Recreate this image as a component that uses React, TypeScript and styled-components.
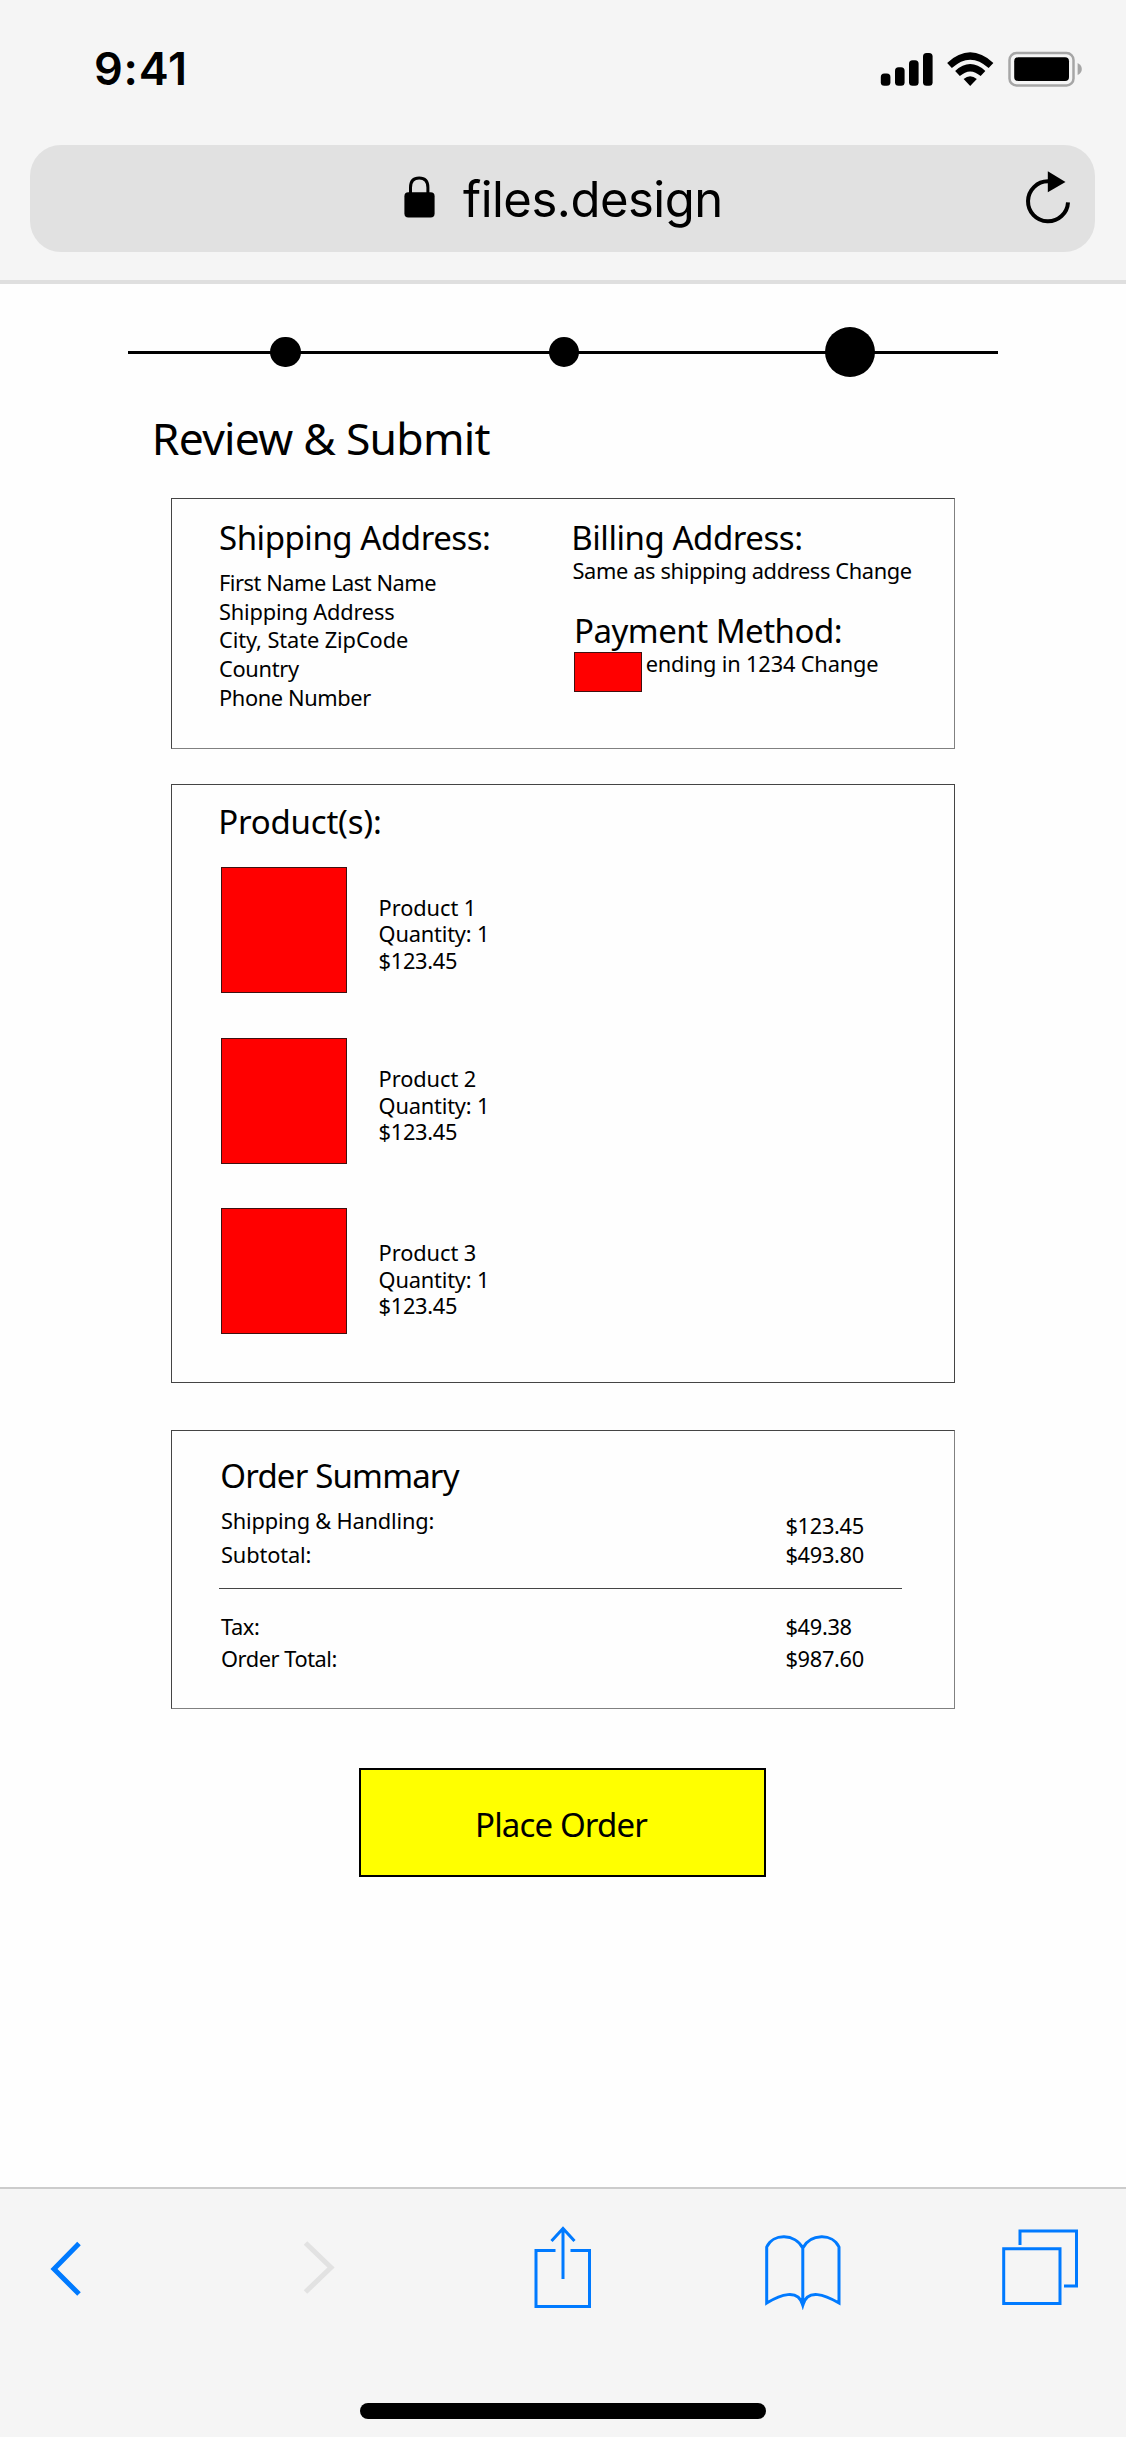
import React from 'react';
import styled, { createGlobalStyle } from 'styled-components';

const GlobalStyle = createGlobalStyle`
  * { box-sizing: border-box; }
  body { margin: 0; background: #fff; }
`;

const Screen = styled.div`
  width: 1126px;
  height: 2437px;
  display: flex;
  flex-direction: column;
  overflow: hidden;
  background: #fefefe;
  color: #000;
  font-family: 'Noto Sans', 'Open Sans', sans-serif;
`;

/* Browser chrome */
const BrowserHeader = styled.header`
  height: 284px;
  flex: none;
  background: #f5f5f5;
  border-bottom: 4px solid #dfdfdf;
  font-family: Inter, 'Liberation Sans', sans-serif;
`;
const StatusBar = styled.div`
  height: 144.7px;
  padding: 41px 44px 0 94px;
  display: flex;
  justify-content: space-between;
  align-items: flex-start;
`;
const Clock = styled.div`
  font-size: 45px;
  line-height: 56px;
  font-weight: 600;
  letter-spacing: 0.8px;
`;
const StatusIcons = styled.svg`
  margin-top: 7px;
  display: block;
`;
const AddressBar = styled.div`
  height: 107.5px;
  margin: 0 31px 0 30px;
  padding: 0 25px 0 374px;
  border-radius: 31px;
  background: #e1e1e1;
  display: flex;
  align-items: center;
`;
const Host = styled.div`
  flex: 1;
  margin-left: 27px;
  padding-top: 4px;
  font-size: 49px;
  line-height: 60px;
  letter-spacing: -0.5px;
`;

/* Page */
const Page = styled.main`
  flex: 1;
  display: flex;
  flex-direction: column;
  align-items: flex-start;
`;
const Steps = styled.div`
  height: 50px;
  margin: 43px 0 0 127.6px;
  display: flex;
  align-items: center;
`;
const StepLine = styled.div<{ $w: number }>`
  width: ${(p) => p.$w}px;
  height: 3px;
  background: #000;
`;
const StepDot = styled.div<{ $size?: number }>`
  width: ${(p) => p.$size ?? 30.4}px;
  height: ${(p) => p.$size ?? 30.4}px;
  margin: 0 -2px;
  border-radius: 50%;
  background: #000;
`;
const Title = styled.h1`
  margin: 31px 0 0 151.8px;
  font-size: 44.5px;
  line-height: 60px;
  font-weight: 400;
  letter-spacing: -0.75px;
`;
const Card = styled.section<{ $top: number; $height: number; $pad: string; $edge?: string }>`
  width: 784px;
  height: ${(p) => p.$height}px;
  margin: ${(p) => p.$top}px 0 0 171px;
  padding: ${(p) => p.$pad};
  border: 1px solid #444;
  border-right-color: ${(p) => p.$edge ?? '#444'};
  border-bottom-color: ${(p) => p.$edge ?? '#444'};
`;
const Heading = styled.h2<{ $ls?: number; $m?: string }>`
  margin: ${(p) => p.$m ?? '0'};
  font-size: 33px;
  line-height: 40px;
  font-weight: 400;
  letter-spacing: ${(p) => p.$ls ?? -0.45}px;
  white-space: nowrap;
`;
const Line = styled.div<{ $ls?: number; $lh?: number; $m?: string }>`
  margin: ${(p) => p.$m ?? '0'};
  font-size: 21.8px;
  line-height: ${(p) => p.$lh ?? 28.8}px;
  letter-spacing: ${(p) => p.$ls ?? -0.38}px;
  white-space: nowrap;
`;
const Columns = styled.div`
  display: grid;
  grid-template-columns: 352.3px 1fr;
`;
const PaymentRow = styled.div`
  display: flex;
  align-items: flex-start;
  margin: 1px 0 0 3.2px;
`;
const CardBrand = styled.div`
  width: 68px;
  height: 39.7px;
  margin-right: 3.2px;
  border: 1px solid #401010;
  background: #f00;
`;
const ProductList = styled.div`
  margin: 25px 0 0 2.7px;
  display: grid;
  gap: 44.6px;
`;
const ProductRow = styled.div`
  display: flex;
  height: 126px;
`;
const Thumb = styled.div`
  width: 126px;
  height: 126px;
  border: 1px solid #401010;
  background: #f00;
`;
const ProductInfo = styled.div<{ $offset: number }>`
  margin-left: 31.6px;
  padding-top: ${(p) => p.$offset}px;
`;
const SummaryRow = styled.div<{ $top: number }>`
  display: grid;
  grid-template-columns: 564.4px auto;
  margin: ${(p) => p.$top}px 0 0 2px;
`;
const Divider = styled.hr`
  width: 683px;
  height: 1px;
  margin: 18.5px 0 0;
  border: 0;
  background: #444;
`;
const PlaceOrder = styled.button`
  width: 407px;
  height: 109px;
  margin: 59px 0 0 359px;
  padding: 4px 3px 0 0;
  border: 2px solid #000;
  background: #ff0;
  color: #000;
  font-family: inherit;
  font-size: 33px;
  line-height: 40px;
  letter-spacing: -0.85px;
`;

/* Bottom toolbar */
const Toolbar = styled.footer`
  height: 250px;
  flex: none;
  background: #f5f5f5;
  border-top: 2px solid #ccc;
  display: flex;
  flex-direction: column;
`;
const ToolRow = styled.nav`
  display: flex;
  padding: 37px 0 0 50px;
`;
const ToolIcon = styled.svg<{ $gap?: number }>`
  display: block;
  margin-left: ${(p) => p.$gap ?? 0}px;
  fill: none;
  stroke: #007aff;
  stroke-width: 3;
`;
const HomeBar = styled.div`
  width: 405.5px;
  height: 16.5px;
  margin: 92.7px 0 0 360.2px;
  border-radius: 9px;
  background: #000;
`;

const addressLines: [string, number][] = [
  ['First Name Last Name', -0.45],
  ['Shipping Address', -0.19],
  ['City, State ZipCode', -0.1],
  ['Country', -0.3],
  ['Phone Number', -0.38],
];
const products = [
  { name: 'Product 1', offset: 27.5 },
  { name: 'Product 2', offset: 28.5 },
  { name: 'Product 3', offset: 31.8 },
];

export default function App() {
  return (
    <Screen>
      <GlobalStyle />
      <BrowserHeader>
        <StatusBar>
          <Clock>9:41</Clock>
          <StatusIcons width="204" height="42" viewBox="878 48 204 42">
            <rect x="880.8" y="73.5" width="9.6" height="12.3" rx="3.5" />
            <rect x="895" y="67.2" width="9.6" height="18.6" rx="3.5" />
            <rect x="909" y="60.3" width="9.6" height="25.5" rx="3.5" />
            <rect x="923" y="53" width="9.6" height="32.8" rx="3.5" />
            <g fill="none" stroke="#000" strokeWidth="7">
              <path d="M949.5 65.5 Q970.2 46.5 991 65.5" />
              <path d="M957.5 73.5 Q970.2 62 983 73.5" />
            </g>
            <path d="M963.6 79 Q970.2 73.5 976.8 79 L970.2 86 Z" />
            <rect x="1009.5" y="53" width="64" height="32.5" rx="7" fill="none" stroke="#a6a6a6" strokeWidth="2.5" />
            <rect x="1014.2" y="57.2" width="54.8" height="23.8" rx="4" />
            <path d="M1077.6 63 Q1081.8 65 1081.8 69 Q1081.8 73 1077.6 75 Z" fill="#a6a6a6" />
          </StatusIcons>
        </StatusBar>
        <AddressBar>
          <svg width="32" height="44" viewBox="0 0 32 44">
            <rect x="0.4" y="16.2" width="30.2" height="25.4" rx="4" />
            <path d="M6.5 18 V11.5 Q6.5 2 15.2 2 Q23.9 2 23.9 11.5 V18" fill="none" stroke="#000" strokeWidth="3" />
          </svg>
          <Host>files.design</Host>
          <svg width="46" height="56" viewBox="1024 170 46 56">
            <path d="M1048 181.3 A20 20 0 1 0 1068 202.3" fill="none" stroke="#000" strokeWidth="4" />
            <path d="M1047.8 171.3 L1065.5 182 L1047.8 192.3 Z" />
          </svg>
        </AddressBar>
      </BrowserHeader>

      <Page>
        <Steps>
          <StepLine $w={144.7} />
          <StepDot />
          <StepLine $w={252} />
          <StepDot />
          <StepLine $w={250} />
          <StepDot $size={50} />
          <StepLine $w={125} />
        </Steps>
        <Title>Review &amp; Submit</Title>

        <Card $top={30} $height={251} $pad="19px 0 0 47px" $edge="#808080">
          <Columns>
            <div>
              <Heading $m="0 0 10.8px">Shipping Address:</Heading>
              {addressLines.map(([text, ls]) => (
                <Line key={text} $ls={ls}>{text}</Line>
              ))}
            </div>
            <div>
              <Heading>Billing Address:</Heading>
              <Line $m="-1.2px 0 25.3px 1.2px" $ls={-0.36}>Same as shipping address Change</Line>
              <Heading $m="0 0 0 2.7px" $ls={-0.5}>Payment Method:</Heading>
              <PaymentRow>
                <CardBrand />
                <Line $m="-1.9px 0 0 0" $ls={-0.17}>ending in 1234 Change</Line>
              </PaymentRow>
            </div>
          </Columns>
        </Card>

        <Card $top={35} $height={599} $pad="17.2px 0 0 46.3px">
          <Heading $ls={-0.22}>Product(s):</Heading>
          <ProductList>
            {products.map((p) => (
              <ProductRow key={p.name}>
                <Thumb />
                <ProductInfo $offset={p.offset}>
                  <Line $lh={26.6} $ls={-0.08}>{p.name}</Line>
                  <Line $lh={26.6} $ls={-0.18}>Quantity: 1</Line>
                  <Line $lh={26.6} $ls={-0.3}>$123.45</Line>
                </ProductInfo>
              </ProductRow>
            ))}
          </ProductList>
        </Card>

        <Card $top={47} $height={279} $pad="24.5px 0 0 47px" $edge="#808080">
          <Heading $m="0 0 0 1.3px" $ls={-0.82}>Order Summary</Heading>
          <SummaryRow $top={10}>
            <Line $lh={30} $ls={-0.19}>Shipping &amp; Handling:</Line>
            <Line $lh={30} $m="5px 0 -5px" $ls={-0.3}>$123.45</Line>
          </SummaryRow>
          <SummaryRow $top={4}>
            <Line $lh={30} $ls={-0.13}>Subtotal:</Line>
            <Line $lh={30} $ls={-0.3}>$493.80</Line>
          </SummaryRow>
          <Divider />
          <SummaryRow $top={22.5}>
            <Line $lh={30}>Tax:</Line>
            <Line $lh={30} $ls={-0.3}>$49.38</Line>
          </SummaryRow>
          <SummaryRow $top={2.9}>
            <Line $lh={30} $ls={-0.45}>Order Total:</Line>
            <Line $lh={30} $ls={-0.3}>$987.60</Line>
          </SummaryRow>
        </Card>

        <PlaceOrder>Place Order</PlaceOrder>
      </Page>

      <Toolbar>
        <ToolRow>
          <ToolIcon width="32" height="84" viewBox="0 0 32 84">
            <path d="M29 17.5 L4 43 L29 68" strokeWidth="5" />
          </ToolIcon>
          <ToolIcon $gap={220} width="34" height="84" viewBox="0 0 34 84">
            <path d="M3.5 17 L29 41.5 L3.5 66" stroke="#e2e2e2" strokeWidth="5" />
          </ToolIcon>
          <ToolIcon $gap={197} width="60" height="84" viewBox="0 0 60 84">
            <path d="M22.5 24.5 H3 V80.5 H56.5 V24.5 H37.5" />
            <path d="M30 2.5 V53 M18.5 15 L30 2.5 L41.5 15" />
          </ToolIcon>
          <ToolIcon $gap={171} width="78" height="84" viewBox="0 0 78 84">
            <path d="M38.8 22 C31 7.5 9 7 2.7 21 V77 C16 69 34 62 38.8 79 C43.6 62 61 69 75 77 V21 C68.6 7 46.6 7.5 38.8 22 V80" />
          </ToolIcon>
          <ToolIcon $gap={159} width="79" height="84" viewBox="0 0 79 84">
            <path d="M2.7 22.7 H59 V77.5 H2.7 Z M19 19 V5 H75.5 V60 H63" />
          </ToolIcon>
        </ToolRow>
        <HomeBar />
      </Toolbar>
    </Screen>
  );
}
